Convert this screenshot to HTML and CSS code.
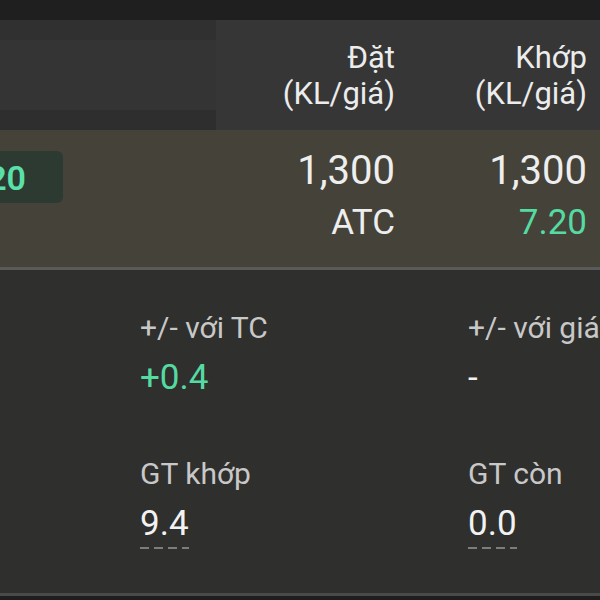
FILE: index.html
```html
<!DOCTYPE html>
<html lang="vi">
<head>
<meta charset="utf-8">
<title>Chi tiết lệnh</title>
<link rel="stylesheet" href="styles.css">
</head>
<body>
<div class="screen">
  <div class="topbar"></div>
  <div class="head">
    <div class="skeleton">
      <div class="sk-top"></div>
      <div class="sk-mid"></div>
      <div class="sk-bot"></div>
    </div>
    <div class="hcell">Đặt<br>(KL/giá)</div>
    <div class="hcell">Khớp<br>(KL/giá)</div>
  </div>
  <div class="row">
    <div class="lead">
      <div class="badge"><span>7.20</span></div>
    </div>
    <div class="cell">
      <div class="big">1,300</div>
      <div class="sub">ATC</div>
    </div>
    <div class="cell">
      <div class="big">1,300</div>
      <div class="sub up">7.20</div>
    </div>
  </div>
  <div class="details">
    <div class="item">
      <div class="label">+/- với TC</div>
      <div class="value up">+0.4</div>
    </div>
    <div class="item">
      <div class="label">+/- với giá</div>
      <div class="value">-</div>
    </div>
    <div class="item">
      <div class="label">GT khớp</div>
      <div class="value"><span class="dash">9.4</span></div>
    </div>
    <div class="item">
      <div class="label">GT còn</div>
      <div class="value"><span class="dash">0.0</span></div>
    </div>
  </div>
  <div class="footer"></div>
</div>
</body>
</html>
```
FILE: styles.css
```css
html, body {
  margin: 0;
  padding: 0;
  background: #1e1e1e;
  overflow: hidden;
}
.screen {
  width: 600px;
  height: 600px;
  overflow: hidden;
  font-family: Roboto, "Noto Sans", "Liberation Sans", sans-serif;
  color: #eeeeee;
  white-space: nowrap;
}
.topbar {
  height: 20px;
  background: #1f1f1f;
}
.head {
  height: 110px;
  display: grid;
  grid-template-columns: 216px 1fr 192px;
  padding-right: 13px;
  background: #363636;
}
.skeleton {
  display: flex;
  flex-direction: column;
}
.sk-top { height: 20px; background: #303030; }
.sk-mid { height: 70px; background: #343434; }
.sk-bot { height: 20px; background: #2e2e2e; }
.hcell {
  text-align: right;
  font-size: 31px;
  line-height: 36px;
  padding-top: 20px;
  color: #ececec;
}
.row {
  height: 137px;
  display: grid;
  grid-template-columns: 216px 1fr 192px;
  padding-right: 13px;
  background: #444239;
  border-bottom: 3px solid #5a5a5a;
}
.lead {
  padding-top: 21px;
}
.badge {
  width: 63px;
  height: 52px;
  box-sizing: border-box;
  display: flex;
  justify-content: flex-end;
  align-items: center;
  overflow: hidden;
  padding-right: 37px;
  padding-top: 2px;
  background: #2c3a32;
  border-radius: 0 6px 6px 0;
  color: #5ae0a8;
  font-size: 34px;
  font-weight: 600;
}
.cell {
  text-align: right;
  padding-top: 17px;
}
.big {
  font-size: 40px;
  line-height: 48px;
}
.sub {
  font-size: 35px;
  line-height: 56px;
}
.details {
  height: 283px;
  box-sizing: content-box;
  padding: 40px 0 0 140px;
  display: grid;
  grid-template-columns: 328px 1fr;
  grid-auto-rows: min-content;
  row-gap: 57px;
  background: #2f2f2d;
  border-bottom: 3px solid #4a4a4a;
}
.label {
  font-size: 30px;
  line-height: 36px;
  color: #c8c8c8;
}
.value {
  font-size: 35px;
  line-height: 42px;
  margin-top: 11px;
  color: #f2f2f2;
}
.up,
.value.up {
  color: #55dba2;
}
.dash {
  display: inline-block;
  padding-bottom: 4px;
  background-image: repeating-linear-gradient(to right, #7d7d7d 0 9px, transparent 9px 14px);
  background-size: 100% 2px;
  background-position: left bottom;
  background-repeat: no-repeat;
}
.footer {
  height: 4px;
  background: #1e1e1e;
}
```
